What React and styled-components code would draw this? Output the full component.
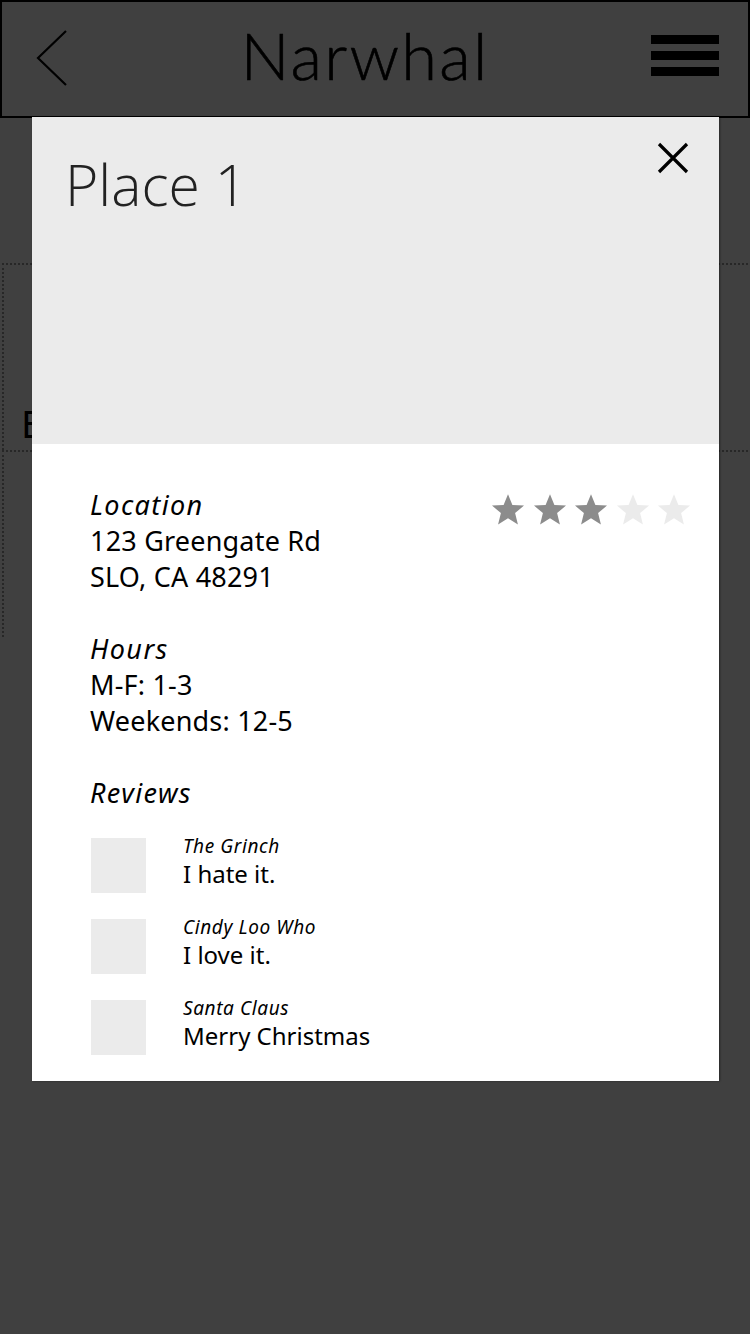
import React from 'react';
import styled, { createGlobalStyle } from 'styled-components';

const GlobalStyle = createGlobalStyle`
  * { box-sizing: border-box; }
  html, body { margin: 0; padding: 0; background: #fff; }
  body { font-family: 'Noto Sans', 'Open Sans', sans-serif; color: #000; }
`;

const reviews = [
  { name: 'The Grinch', text: 'I hate it.' },
  { name: 'Cindy Loo Who', text: 'I love it.' },
  { name: 'Santa Claus', text: 'Merry Christmas' },
];

function Star({ on }) {
  return (
    <StarIcon viewBox="0 0 24 24" on={on ? 1 : 0}>
      <path d="M12 1.5l3.1 7.6 8.2.5-6.3 5.3 2 8L12 18.5l-7 4.4 2-8L.7 9.6l8.2-.5z" />
    </StarIcon>
  );
}

export default function App() {
  return (
    <Page>
      <GlobalStyle />
      <Header>
        <BackButton>
          <svg width="34" height="58" viewBox="0 0 34 58">
            <polyline points="31,2 3,29 31,56" fill="none" stroke="#000" strokeWidth="2.2" />
          </svg>
        </BackButton>
        <Title>Narwhal</Title>
        <MenuIcon>
          <span />
          <span />
          <span />
        </MenuIcon>
      </Header>
      <Spacer />
      <ListItem>
        <ItemLabel>E</ItemLabel>
      </ListItem>
      <ListItem />

      <Overlay>
        <Modal>
          <Hero>
            <PlaceName>Place 1</PlaceName>
            <CloseButton>
              <svg width="32" height="32" viewBox="0 0 32 32">
                <path d="M2 2L30 30M30 2L2 30" stroke="#000" strokeWidth="3.2" />
              </svg>
            </CloseButton>
          </Hero>
          <Body>
            <Stars>
              <Star on />
              <Star on />
              <Star on />
              <Star />
              <Star />
            </Stars>
            <Section>
              <Label>Location</Label>
              <Line>123 Greengate Rd</Line>
              <Line>SLO, CA 48291</Line>
            </Section>
            <Section>
              <Label>Hours</Label>
              <Line>M-F: 1-3</Line>
              <Line>Weekends: 12-5</Line>
            </Section>
            <Label>Reviews</Label>
            <ReviewList>
              {reviews.map((r) => (
                <Review key={r.name}>
                  <Avatar />
                  <ReviewText>
                    <Reviewer>{r.name}</Reviewer>
                    <Comment>{r.text}</Comment>
                  </ReviewText>
                </Review>
              ))}
            </ReviewList>
          </Body>
        </Modal>
      </Overlay>
    </Page>
  );
}

const Page = styled.div`
  width: 750px;
  height: 1334px;
  position: relative;
  overflow: hidden;
  background: #fff;
`;

const Header = styled.header`
  height: 118px;
  width: 750px;
  border: 2.5px solid #000;
  display: flex;
  align-items: center;
  justify-content: space-between;
  padding: 0 29px 8px 33px;
`;

const BackButton = styled.div`
  width: 40px;
  display: flex;
  margin-top: 6px;
`;

const Title = styled.h1`
  margin: 0 0 0 4px;
  font-family: 'Lato', 'Noto Sans', sans-serif;
  font-weight: 300;
  font-size: 65px;
  letter-spacing: 2.2px;
  color: #000;
  -webkit-text-stroke: 0.6px #000;
`;

const MenuIcon = styled.div`
  width: 68px;
  display: flex;
  flex-direction: column;
  gap: 7px;

  span {
    height: 9px;
    background: #000;
  }
`;

const Spacer = styled.div`
  height: 145px;
`;

const ListItem = styled.div`
  height: 187px;
  margin: 0 -10px 0 2px;
  border: 2px dotted #9a9a9a;
  border-bottom: none;
  display: flex;
  align-items: center;
  padding: 0 17px;

  &:last-of-type {
    border-bottom: 2px dotted #9a9a9a;
  }
`;

const ItemLabel = styled.span`
  font-size: 38px;
  padding-top: 130px;
`;

const Overlay = styled.div`
  position: absolute;
  inset: 0;
  background: rgba(0, 0, 0, 0.75);
  padding: 117px 31px 0 32px;
`;

const Modal = styled.div`
  width: 687px;
  background: #fff;
  box-shadow: 1px 0 2px rgba(0, 0, 0, 0.4);
`;

const Hero = styled.div`
  height: 327px;
  background: #ebebeb;
  display: flex;
  justify-content: space-between;
  align-items: flex-start;
  padding: 28px 30px 0 33px;
`;

const PlaceName = styled.h2`
  margin: 0;
  font-family: 'Open Sans', sans-serif;
  font-weight: 300;
  font-size: 57px;
  color: #222;
`;

const CloseButton = styled.div`
  display: flex;
  margin-top: -3px;
`;

const Body = styled.div`
  position: relative;
  padding: 43px 40px 26px 58px;
`;

const Stars = styled.div`
  position: absolute;
  top: 48px;
  right: 28px;
  display: flex;
  gap: 7.5px;
`;

const StarIcon = styled.svg`
  width: 34px;
  height: 34px;
  fill: ${({ on }) => (on ? '#8c8c8c' : '#ebebeb')};
`;

const Section = styled.div`
  margin-bottom: 36px;
`;

const Label = styled.div`
  font-style: italic;
  font-size: 27px;
  line-height: 36px;
  letter-spacing: 1.4px;
`;

const Line = styled.div`
  font-size: 27px;
  line-height: 36px;
  letter-spacing: 0.2px;
`;

const ReviewList = styled.div`
  margin-top: 27px;
  display: flex;
  flex-direction: column;
  gap: 26px;
`;

const Review = styled.div`
  display: flex;
  align-items: flex-start;
`;

const Avatar = styled.div`
  width: 55px;
  height: 55px;
  background: #ebebeb;
  flex-shrink: 0;
  margin: 0 37px 0 1px;
`;

const ReviewText = styled.div`
  display: flex;
  flex-direction: column;
  margin-top: -5px;
`;

const Reviewer = styled.div`
  font-style: italic;
  font-size: 19px;
  line-height: 26px;
  letter-spacing: 0.6px;
`;

const Comment = styled.div`
  font-size: 24px;
  line-height: 30px;
`;
